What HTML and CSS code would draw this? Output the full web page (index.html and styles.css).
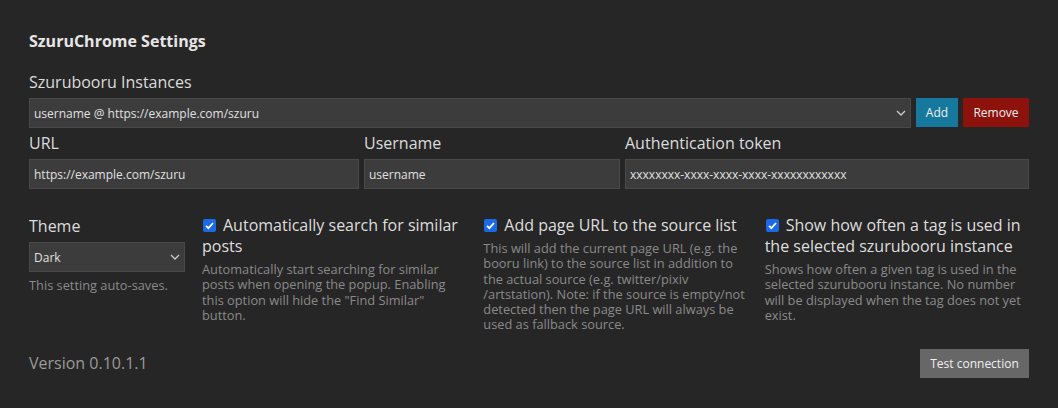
FILE: index.html
```html
<!DOCTYPE html>
<html>
<head>
<meta charset="utf-8">
<link rel="stylesheet" href="styles.css">
</head>
<body>
<div class="page">
  <h1 class="title">SzuruChrome Settings</h1>

  <div class="label">Szurubooru Instances</div>
  <div class="instance-row">
    <div class="select-wrap">
      <select class="select"><option>username @ https://example.com/szuru</option></select>
      <svg class="chevron" width="10" height="6" viewBox="0 0 10 6"><path d="M1 1l4 4 4-4" fill="none" stroke="#ccc" stroke-width="1.3"/></svg>
    </div>
    <button class="btn btn-add">Add</button>
    <button class="btn btn-remove">Remove</button>
  </div>

  <div class="fields">
    <div class="field">
      <div class="label">URL</div>
      <input class="input" value="https://example.com/szuru">
    </div>
    <div class="field">
      <div class="label">Username</div>
      <input class="input" value="username">
    </div>
    <div class="field">
      <div class="label">Authentication token</div>
      <input class="input" value="xxxxxxxx-xxxx-xxxx-xxxx-xxxxxxxxxxxx">
    </div>
  </div>

  <div class="options">
    <div class="option">
      <div class="label">Theme</div>
      <div class="select-wrap">
        <select class="select"><option>Dark</option></select>
        <svg class="chevron" width="10" height="6" viewBox="0 0 10 6"><path d="M1 1l4 4 4-4" fill="none" stroke="#ccc" stroke-width="1.3"/></svg>
      </div>
      <p class="desc desc-theme">This setting auto-saves.</p>
    </div>
    <div class="option">
      <label class="check-label"><span class="check"><svg width="13" height="13" viewBox="0 0 13 13"><rect width="13" height="13" rx="2" fill="#1a6ae8"/><path d="M3 6.8l2.4 2.3L10 4" fill="none" stroke="#fff" stroke-width="1.8"/></svg></span>Automatically search for similar posts</label>
      <p class="desc">Automatically start searching for similar posts when opening the popup. Enabling this option will hide the "Find Similar" button.</p>
    </div>
    <div class="option">
      <label class="check-label"><span class="check"><svg width="13" height="13" viewBox="0 0 13 13"><rect width="13" height="13" rx="2" fill="#1a6ae8"/><path d="M3 6.8l2.4 2.3L10 4" fill="none" stroke="#fff" stroke-width="1.8"/></svg></span>Add page URL to the source list</label>
      <p class="desc">This will add the current page URL (e.g. the booru link) to the source list in addition to the actual source (e.g. twitter/pixiv /artstation). Note: if the source is empty/not detected then the page URL will always be used as fallback source.</p>
    </div>
    <div class="option">
      <label class="check-label"><span class="check"><svg width="13" height="13" viewBox="0 0 13 13"><rect width="13" height="13" rx="2" fill="#1a6ae8"/><path d="M3 6.8l2.4 2.3L10 4" fill="none" stroke="#fff" stroke-width="1.8"/></svg></span>Show how often a tag is used in the selected szurubooru instance</label>
      <p class="desc">Shows how often a given tag is used in the selected szurubooru instance. No number will be displayed when the tag does not yet exist.</p>
    </div>
  </div>

  <div class="footer">
    <span class="version">Version 0.10.1.1</span>
    <button class="btn btn-test">Test connection</button>
  </div>
</div>
</body>
</html>
```
FILE: styles.css
```css
html, body {
  margin: 0;
  background: #262626;
}
body {
  font-family: "Open Sans", "Noto Sans", sans-serif;
  color: #dedede;
}
.page {
  padding: 30px 29px 0 29px;
}
.title {
  margin: 0 0 19px 0;
  font-size: 16px;
  font-weight: 700;
  line-height: 22px;
  color: #e6e6e6;
}
.label {
  font-size: 16px;
  line-height: 22px;
  margin-bottom: 5px;
  color: #dcdcdc;
}
.instance-row {
  display: flex;
  gap: 5px;
}
.instance-row .select-wrap {
  flex: 1;
}
.select-wrap {
  position: relative;
  height: 30px;
}
.select {
  appearance: none;
  -webkit-appearance: none;
  width: 100%;
  height: 30px;
  margin: 0;
  background: #3c3c3c;
  border: 1px solid #494949;
  color: #e0e0e0;
  font-family: inherit;
  font-size: 12px;
  padding: 0 4px;
  outline: none;
  border-radius: 0;
}
.chevron {
  position: absolute;
  right: 5px;
  top: 12px;
  pointer-events: none;
}
.btn {
  border: none;
  font-family: inherit;
  font-size: 12px;
  color: #f0f0f0;
  height: 29px;
  padding: 0 9px;
  border-radius: 0;
}
.btn-add {
  background: #17789e;
  width: 42px;
}
.btn-remove {
  background: #8c120b;
  width: 66px;
}
.fields {
  display: grid;
  grid-template-columns: 330px 256px 1fr;
  gap: 5px;
  margin-top: 4px;
}
.input {
  box-sizing: border-box;
  width: 100%;
  height: 30px;
  margin: 0;
  background: #3c3c3c;
  border: 1px solid #494949;
  color: #e0e0e0;
  font-family: inherit;
  font-size: 12px;
  padding: 0 4px;
  outline: none;
}
.options {
  display: grid;
  grid-template-columns: 156px 1fr 1fr 1fr;
  column-gap: 17px;
  margin-top: 26px;
}
.option .select-wrap {
  width: 156px;
}
.check-label {
  display: block;
  font-size: 16px;
  line-height: 21px;
  color: #dedede;
}
.check {
  display: inline-block;
  width: 13px;
  height: 13px;
  margin: 0 7px 0 1px;
  vertical-align: -1px;
}
.check svg {
  display: block;
}
.desc {
  margin: 5px 0 0 0;
  font-size: 12.8px;
  line-height: 15.3px;
  color: #8a8a8a;
}
.desc-theme {
  margin-top: 6px;
}
.footer {
  display: flex;
  justify-content: space-between;
  align-items: center;
  margin-top: 16px;
}
.version {
  font-size: 16px;
  color: #9a9a9a;
}
.btn-test {
  background: #676767;
  width: 109px;
  height: 29px;
  padding: 0;
}
```
